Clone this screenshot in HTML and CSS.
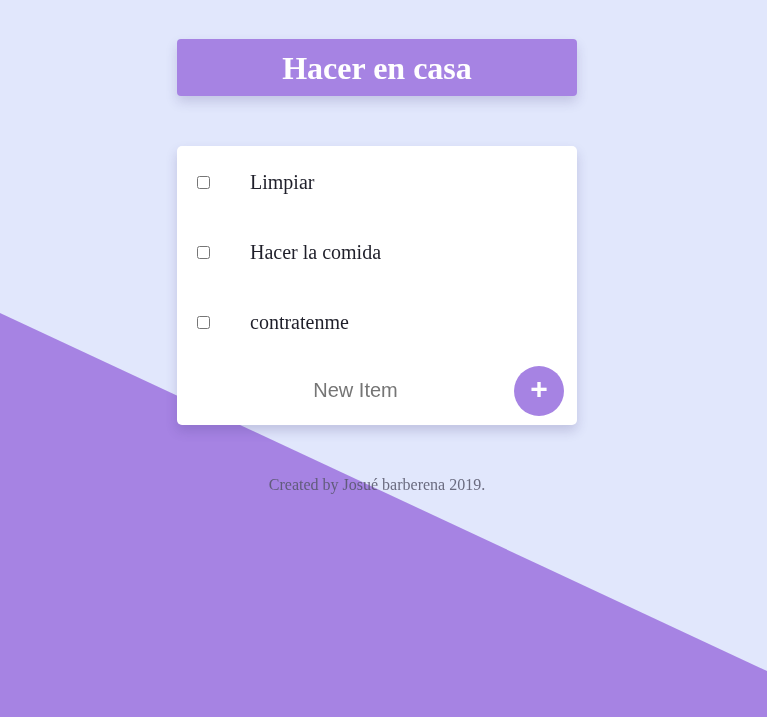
FILE: index.html
```html
<!DOCTYPE html>
<html lang="es">
<head>
<meta charset="utf-8">
<title>Hacer en casa</title>
<link rel="stylesheet" href="styles.css">
</head>
<body>
<div class="backdrop"></div>
<main class="app">
  <header class="title-box">
    <h1 class="title">Hacer en casa</h1>
  </header>
  <section class="card">
    <label class="item"><input type="checkbox" class="check"><span class="item-text">Limpiar</span></label>
    <label class="item"><input type="checkbox" class="check"><span class="item-text">Hacer la comida</span></label>
    <label class="item"><input type="checkbox" class="check"><span class="item-text">contratenme</span></label>
    <form class="new-row">
      <input type="text" class="new-input" placeholder="New Item">
      <button type="button" class="add-btn">+</button>
    </form>
  </section>
  <footer class="footer">Created by Josué barberena 2019.</footer>
</main>
</body>
</html>
```

FILE: styles.css
```css
html, body {
  margin: 0;
  padding: 0;
}
body {
  background: #e1e7fc;
  min-height: 717px;
  font-family: "Liberation Serif", "Times New Roman", serif;
  overflow: hidden;
}
.backdrop {
  position: fixed;
  inset: 0;
  background: #a683e3;
  clip-path: polygon(0 313px, 100% 671px, 100% 100%, 0 100%);
  z-index: 0;
}
.app {
  position: relative;
  z-index: 1;
  width: 400px;
  margin: 39px 0 0 177px;
  display: flex;
  flex-direction: column;
}
.title-box {
  background: #a683e3;
  height: 57px;
  border-radius: 4px;
  box-shadow: 0 6px 12px rgba(60, 50, 120, 0.18);
  display: flex;
  align-items: center;
  justify-content: center;
}
.title {
  margin: 0;
  color: #fff;
  font-size: 32px;
  font-weight: bold;
  line-height: 1;
}
.card {
  margin-top: 50px;
  background: #fff;
  border-radius: 5px;
  box-shadow: 0 6px 12px rgba(60, 50, 120, 0.2);
  height: 279px;
  display: flex;
  flex-direction: column;
  padding-top: 1px;
  box-sizing: border-box;
}
.item {
  height: 70px;
  display: flex;
  align-items: center;
  padding-left: 20px;
}
.check {
  margin: 0;
  width: 13px;
  height: 13px;
}
.item-text {
  margin-left: 40px;
  font-size: 20px;
  color: #1f1f2a;
}
.new-row {
  flex: 1;
  margin: 0;
  display: flex;
  align-items: center;
  padding: 0 13px 1px 20px;
}
.new-input {
  flex: 1;
  border: none;
  outline: none;
  background: transparent;
  text-align: center;
  font-family: "Liberation Sans", Arial, sans-serif;
  font-size: 20px;
  padding: 0;
  color: #333;
}
.new-input::placeholder {
  color: #757575;
}
.add-btn {
  width: 50px;
  height: 50px;
  border-radius: 50%;
  border: none;
  background: #a683e3;
  color: #fff;
  font-family: "Liberation Sans", Arial, sans-serif;
  font-size: 30px;
  font-weight: bold;
  line-height: 1;
  padding: 0 0 3px 0;
  display: flex;
  align-items: center;
  justify-content: center;
}
.footer {
  margin-top: 51px;
  text-align: center;
  font-size: 16px;
  line-height: 18px;
  color: rgba(85, 85, 105, 0.85);
}
```
